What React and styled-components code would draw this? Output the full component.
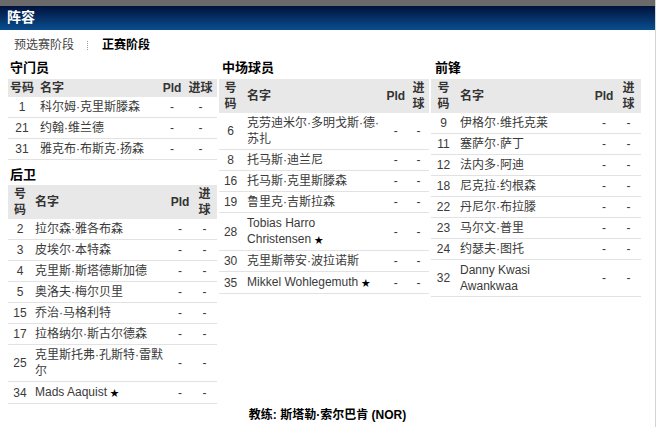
import styled, { createGlobalStyle } from 'styled-components';

const GlobalStyle = createGlobalStyle`
  html, body {
    margin: 0;
    padding: 0;
    background: #fff;
  }
  body {
    font-family: "Liberation Sans", Arial, "Noto Sans CJK SC", sans-serif;
    font-size: 12px;
    color: #333;
  }
`;

const Page = styled.div`
  width: 655px;
  min-height: 427px;
  border-right: 1px solid #d4d4d4;
  background: #fff;
`;

const TopStrip = styled.div`
  height: 6px;
  background: #6a6a6a;
`;

const TitleBar = styled.div`
  height: 24px;
  background: linear-gradient(#00123c, #0a4e90);
  color: #fff;
  font-weight: bold;
  font-size: 14px;
  line-height: 22px;
  padding-left: 7px;
`;

const Tabs = styled.div`
  display: flex;
  align-items: center;
  margin-top: 8px;
  padding-left: 14px;
  height: 14px;
  line-height: 14px;
`;

const Tab = styled.span`
  font-size: 12px;
  font-weight: ${(p) => (p.$active ? 'bold' : 'normal')};
  color: ${(p) => (p.$active ? '#000' : '#444')};
`;

const TabDivider = styled.span`
  width: 0;
  height: 9px;
  border-left: 1px dotted #999;
  margin: 0 14px 0 13px;
`;

const Columns = styled.div`
  display: grid;
  grid-template-columns: 209px 210px 210px;
  column-gap: 2px;
  padding-left: 8px;
  align-items: start;
`;

const Column = styled.div`
  display: flex;
  flex-direction: column;
`;

const Heading = styled.h3`
  margin: ${(p) => (p.$first ? '8px' : '7px')} 0 ${(p) => (p.$first ? '3px' : '2px')};
  padding-left: ${(p) => p.$indent}px;
  font-size: 13px;
  line-height: 16px;
  font-weight: bold;
  color: #000;
`;

const Table = styled.table`
  width: 100%;
  border-collapse: collapse;
  table-layout: fixed;

  th {
    background: #e8e8e8;
    font-weight: bold;
    color: #333;
    line-height: 16px;
    padding: 1px 0;
    text-align: center;
  }

  td {
    line-height: 16px;
    padding: 2px 0;
    border-bottom: 1px solid #e2e2e2;
    text-align: center;
    color: #3a3a3a;
    vertical-align: middle;
  }

  th.name,
  td.name {
    text-align: left;
    padding-left: ${(p) => p.$namePad}px;
  }
`;

const Star = styled.span`
  font-size: 9px;
  color: #000;
  margin-left: 3px;
`;

const Coach = styled.div`
  margin-top: 3px;
  text-align: center;
  font-weight: bold;
  color: #000;
  line-height: 16px;
`;

const groups = [
  [
    {
      title: '守门员',
      cols: [28, 124, 24, 33],
      namePad: 4,
      wrap: false,
      players: [
        ['1', '科尔姆·克里斯滕森'],
        ['21', '约翰·维兰德'],
        ['31', '雅克布·布斯克·扬森'],
      ],
    },
    {
      title: '后卫',
      cols: [24, 136, 24, 25],
      namePad: 3,
      wrap: true,
      players: [
        ['2', '拉尔森·雅各布森'],
        ['3', '皮埃尔·本特森'],
        ['4', '克里斯·斯塔德斯加德'],
        ['5', '奥洛夫·梅尔贝里'],
        ['15', '乔治·马格利特'],
        ['17', '拉格纳尔·斯古尔德森'],
        ['25', '克里斯托弗·孔斯特·雷默尔'],
        ['34', 'Mads Aaquist', true],
      ],
    },
  ],
  [
    {
      title: '中场球员',
      cols: [23, 141, 24, 21],
      namePad: 5,
      wrap: true,
      players: [
        ['6', '克劳迪米尔·多明戈斯·德·苏扎'],
        ['8', '托马斯·迪兰尼'],
        ['16', '托马斯·克里斯滕森'],
        ['19', '鲁里克·吉斯拉森'],
        ['28', 'Tobias Harro Christensen', true],
        ['30', '克里斯蒂安·波拉诺斯'],
        ['35', 'Mikkel Wohlegemuth', true],
      ],
    },
  ],
  [
    {
      title: '前锋',
      cols: [25, 136, 24, 25],
      namePad: 4,
      wrap: true,
      players: [
        ['9', '伊格尔·维托克莱'],
        ['11', '塞萨尔·萨丁'],
        ['12', '法内多·阿迪'],
        ['18', '尼克拉·约根森'],
        ['22', '丹尼尔·布拉滕'],
        ['23', '马尔文·普里'],
        ['24', '约瑟夫·图托'],
        ['32', 'Danny Kwasi\nAwankwaa'],
      ],
    },
  ],
];

const indents = [2, 3, 4];

function SquadTable({ group }) {
  return (
    <Table $namePad={group.namePad}>
      <colgroup>
        {group.cols.map((w, i) => (
          <col key={i} style={{ width: w }} />
        ))}
      </colgroup>
      <thead>
        <tr>
          <th>{group.wrap ? <>号<br />码</> : '号码'}</th>
          <th className="name">名字</th>
          <th>Pld</th>
          <th>{group.wrap ? <>进<br />球</> : '进球'}</th>
        </tr>
      </thead>
      <tbody>
        {group.players.map(([num, name, star]) => (
          <tr key={num}>
            <td>{num}</td>
            <td className="name">
              {name.split('\n').map((line, i) => (
                <span key={i}>
                  {i > 0 && <br />}
                  {line}
                </span>
              ))}
              {star && <Star>★</Star>}
            </td>
            <td>-</td>
            <td>-</td>
          </tr>
        ))}
      </tbody>
    </Table>
  );
}

export default function App() {
  return (
    <Page>
      <GlobalStyle />
      <TopStrip />
      <TitleBar>阵容</TitleBar>
      <Tabs>
        <Tab>预选赛阶段</Tab>
        <TabDivider />
        <Tab $active>正赛阶段</Tab>
      </Tabs>
      <Columns>
        {groups.map((col, ci) => (
          <Column key={ci}>
            {col.map((group, gi) => (
              <div key={group.title}>
                <Heading $first={gi === 0} $indent={indents[ci]}>
                  {group.title}
                </Heading>
                <SquadTable group={group} />
              </div>
            ))}
          </Column>
        ))}
      </Columns>
      <Coach>教练: 斯塔勒·索尔巴肯 (NOR)</Coach>
    </Page>
  );
}
